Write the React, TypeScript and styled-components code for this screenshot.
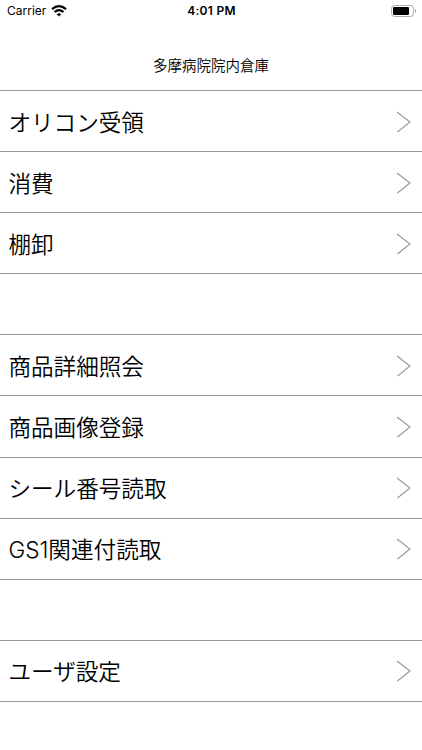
import React from "react";
import styled, { createGlobalStyle } from "styled-components";

const GlobalStyle = createGlobalStyle`
  * { box-sizing: border-box; }
  body { margin: 0; background: #fff; color: #000; font-family: Inter, "Noto Sans CJK JP", sans-serif; }
`;

const Screen = styled.main`
  width: 422px;
  height: 750px;
  overflow: hidden;
  background: #fff;
`;

const StatusBar = styled.header`
  display: grid;
  grid-template-columns: 1fr auto 1fr;
  align-items: center;
  height: 21px;
  padding: 0 5px 0 7px;
`;

const Carrier = styled.div`
  display: flex;
  align-items: center;
  gap: 5px;
  font-size: 12px;
`;

const Clock = styled.time`
  margin-right: 1px;
  font-size: 12px;
  font-weight: 600;
  letter-spacing: 0.3px;
`;

const Battery = styled.div`
  display: flex;
  justify-content: flex-end;
`;

const Title = styled.h1`
  margin: 0;
  height: 69px;
  padding-top: 24px;
  font-size: 14.5px;
  line-height: 42px;
  font-weight: 350;
  text-align: center;
`;

const Menu = styled.ul`
  margin: 0;
  padding: 0;
  list-style: none;
  border-top: 1px solid #999;
`;

const Row = styled.li`
  display: flex;
  align-items: center;
  justify-content: space-between;
  height: 61.1px;
  padding: 0 11px 0 8.4px;
  border-bottom: 1px solid #999;
  font-size: 22.6px;
  font-weight: 350;
`;

const Label = styled.span`
  margin-top: 0.1px;
`;

const ChevronIcon = styled.svg`
  display: block;
  margin-top: 1px;
`;

const items = ["オリコン受領", "消費", "棚卸", "", "商品詳細照会", "商品画像登録", "シール番号読取", "GS1関連付読取", "", "ユーザ設定"];

const Chevron = () => (
  <ChevronIcon width="15" height="22" viewBox="0 0 15 22" fill="none" stroke="#969696" strokeWidth="1.1">
    <path d="M1 1L14 11L1.5 21" />
  </ChevronIcon>
);

export default function App() {
  return (
    <Screen>
      <GlobalStyle />
      <StatusBar>
        <Carrier>
          Carrier
          <svg width="16" height="12" viewBox="0 0 16 12" fill="none" stroke="#000" strokeWidth="2.2">
            <path d="M1 4.2Q8 -1.8 15 4.2M3.5 7Q8 3.1 12.5 7" />
            <path d="M5.7 9.2Q8 7.2 10.3 9.2L8 11.5Z" fill="#000" stroke="none" />
          </svg>
        </Carrier>
        <Clock>4:01 PM</Clock>
        <Battery>
          <svg width="26" height="12" viewBox="0 0 26 12">
            <rect x="0.5" y="0.5" width="22" height="11" rx="3" fill="none" stroke="#aaa" />
            <rect x="2" y="2" width="16" height="8" rx="1.2" />
            <path d="M24 4Q26 6 24 8Z" fill="#999" />
          </svg>
        </Battery>
      </StatusBar>
      <Title>多摩病院院内倉庫</Title>
      <Menu>
        {items.map((label, index) => (
          <Row key={index}>{label && <><Label>{label}</Label><Chevron /></>}</Row>
        ))}
      </Menu>
    </Screen>
  );
}
